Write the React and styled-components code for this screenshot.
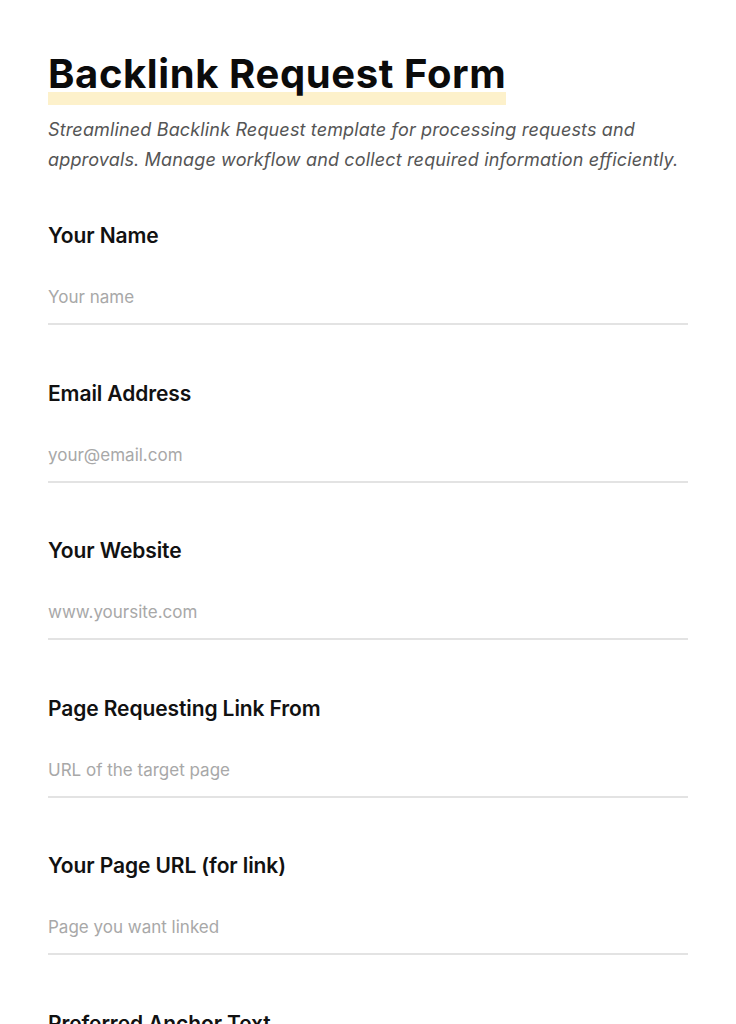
import React from "react";
import styled, { createGlobalStyle } from "styled-components";

const Global = createGlobalStyle`
  html, body { margin: 0; padding: 0; background: #ffffff; }
  body { font-family: Inter, "Open Sans", sans-serif; color: #111; }
  * { box-sizing: border-box; }
`;

const Page = styled.main`
  padding: 46px 48px 0;
  width: 736px;
`;

const Header = styled.header`
  display: flex;
  flex-direction: column;
  align-items: flex-start;
`;

const Title = styled.h1`
  margin: 0;
  padding-bottom: 3px;
  font-family: Inter, sans-serif;
  font-size: 40px;
  font-weight: 700;
  letter-spacing: 0.6px;
  line-height: 56px;
  color: #0b0b0b;
  background: linear-gradient(#fdf1cb, #fdf1cb) no-repeat left bottom / 100% 13px;
`;

const Subtitle = styled.p`
  margin: 10px 0 0;
  font-family: Inter, sans-serif;
  font-style: italic;
  font-size: 18px;
  line-height: 30px;
  color: #555;
  letter-spacing: 0.15px;
`;

const Form = styled.form`
  display: flex;
  flex-direction: column;
  gap: 54.5px;
  margin-top: 47px;
`;

const Field = styled.label`
  display: flex;
  flex-direction: column;
`;

const Label = styled.span`
  font-family: Inter, sans-serif;
  font-size: 21px;
  font-weight: 600;
  letter-spacing: -0.1px;
  line-height: 28px;
  color: #111;
`;

const Input = styled.input`
  margin-top: 35px;
  border: none;
  border-bottom: 2px solid #e3e3e3;
  padding: 0 0 14px;
  font-family: Inter, sans-serif;
  font-size: 17px;
  line-height: 24px;
  color: #111;
  outline: none;
  background: transparent;
  &::placeholder { color: #a8a8a8; }
`;

const fields = [
  ["Your Name", "Your name"],
  ["Email Address", "your@email.com"],
  ["Your Website", "www.yoursite.com"],
  ["Page Requesting Link From", "URL of the target page"],
  ["Your Page URL (for link)", "Page you want linked"],
  ["Preferred Anchor Text", "Anchor text"],
];

export default function App() {
  return (
    <>
      <Global />
      <Page>
        <Header>
          <Title>Backlink Request Form</Title>
          <Subtitle>
            Streamlined Backlink Request template for processing requests and
            approvals. Manage workflow and collect required information efficiently.
          </Subtitle>
        </Header>
        <Form>
          {fields.map(([l, p]) => (
            <Field key={l}>
              <Label>{l}</Label>
              <Input placeholder={p} />
            </Field>
          ))}
        </Form>
      </Page>
    </>
  );
}
